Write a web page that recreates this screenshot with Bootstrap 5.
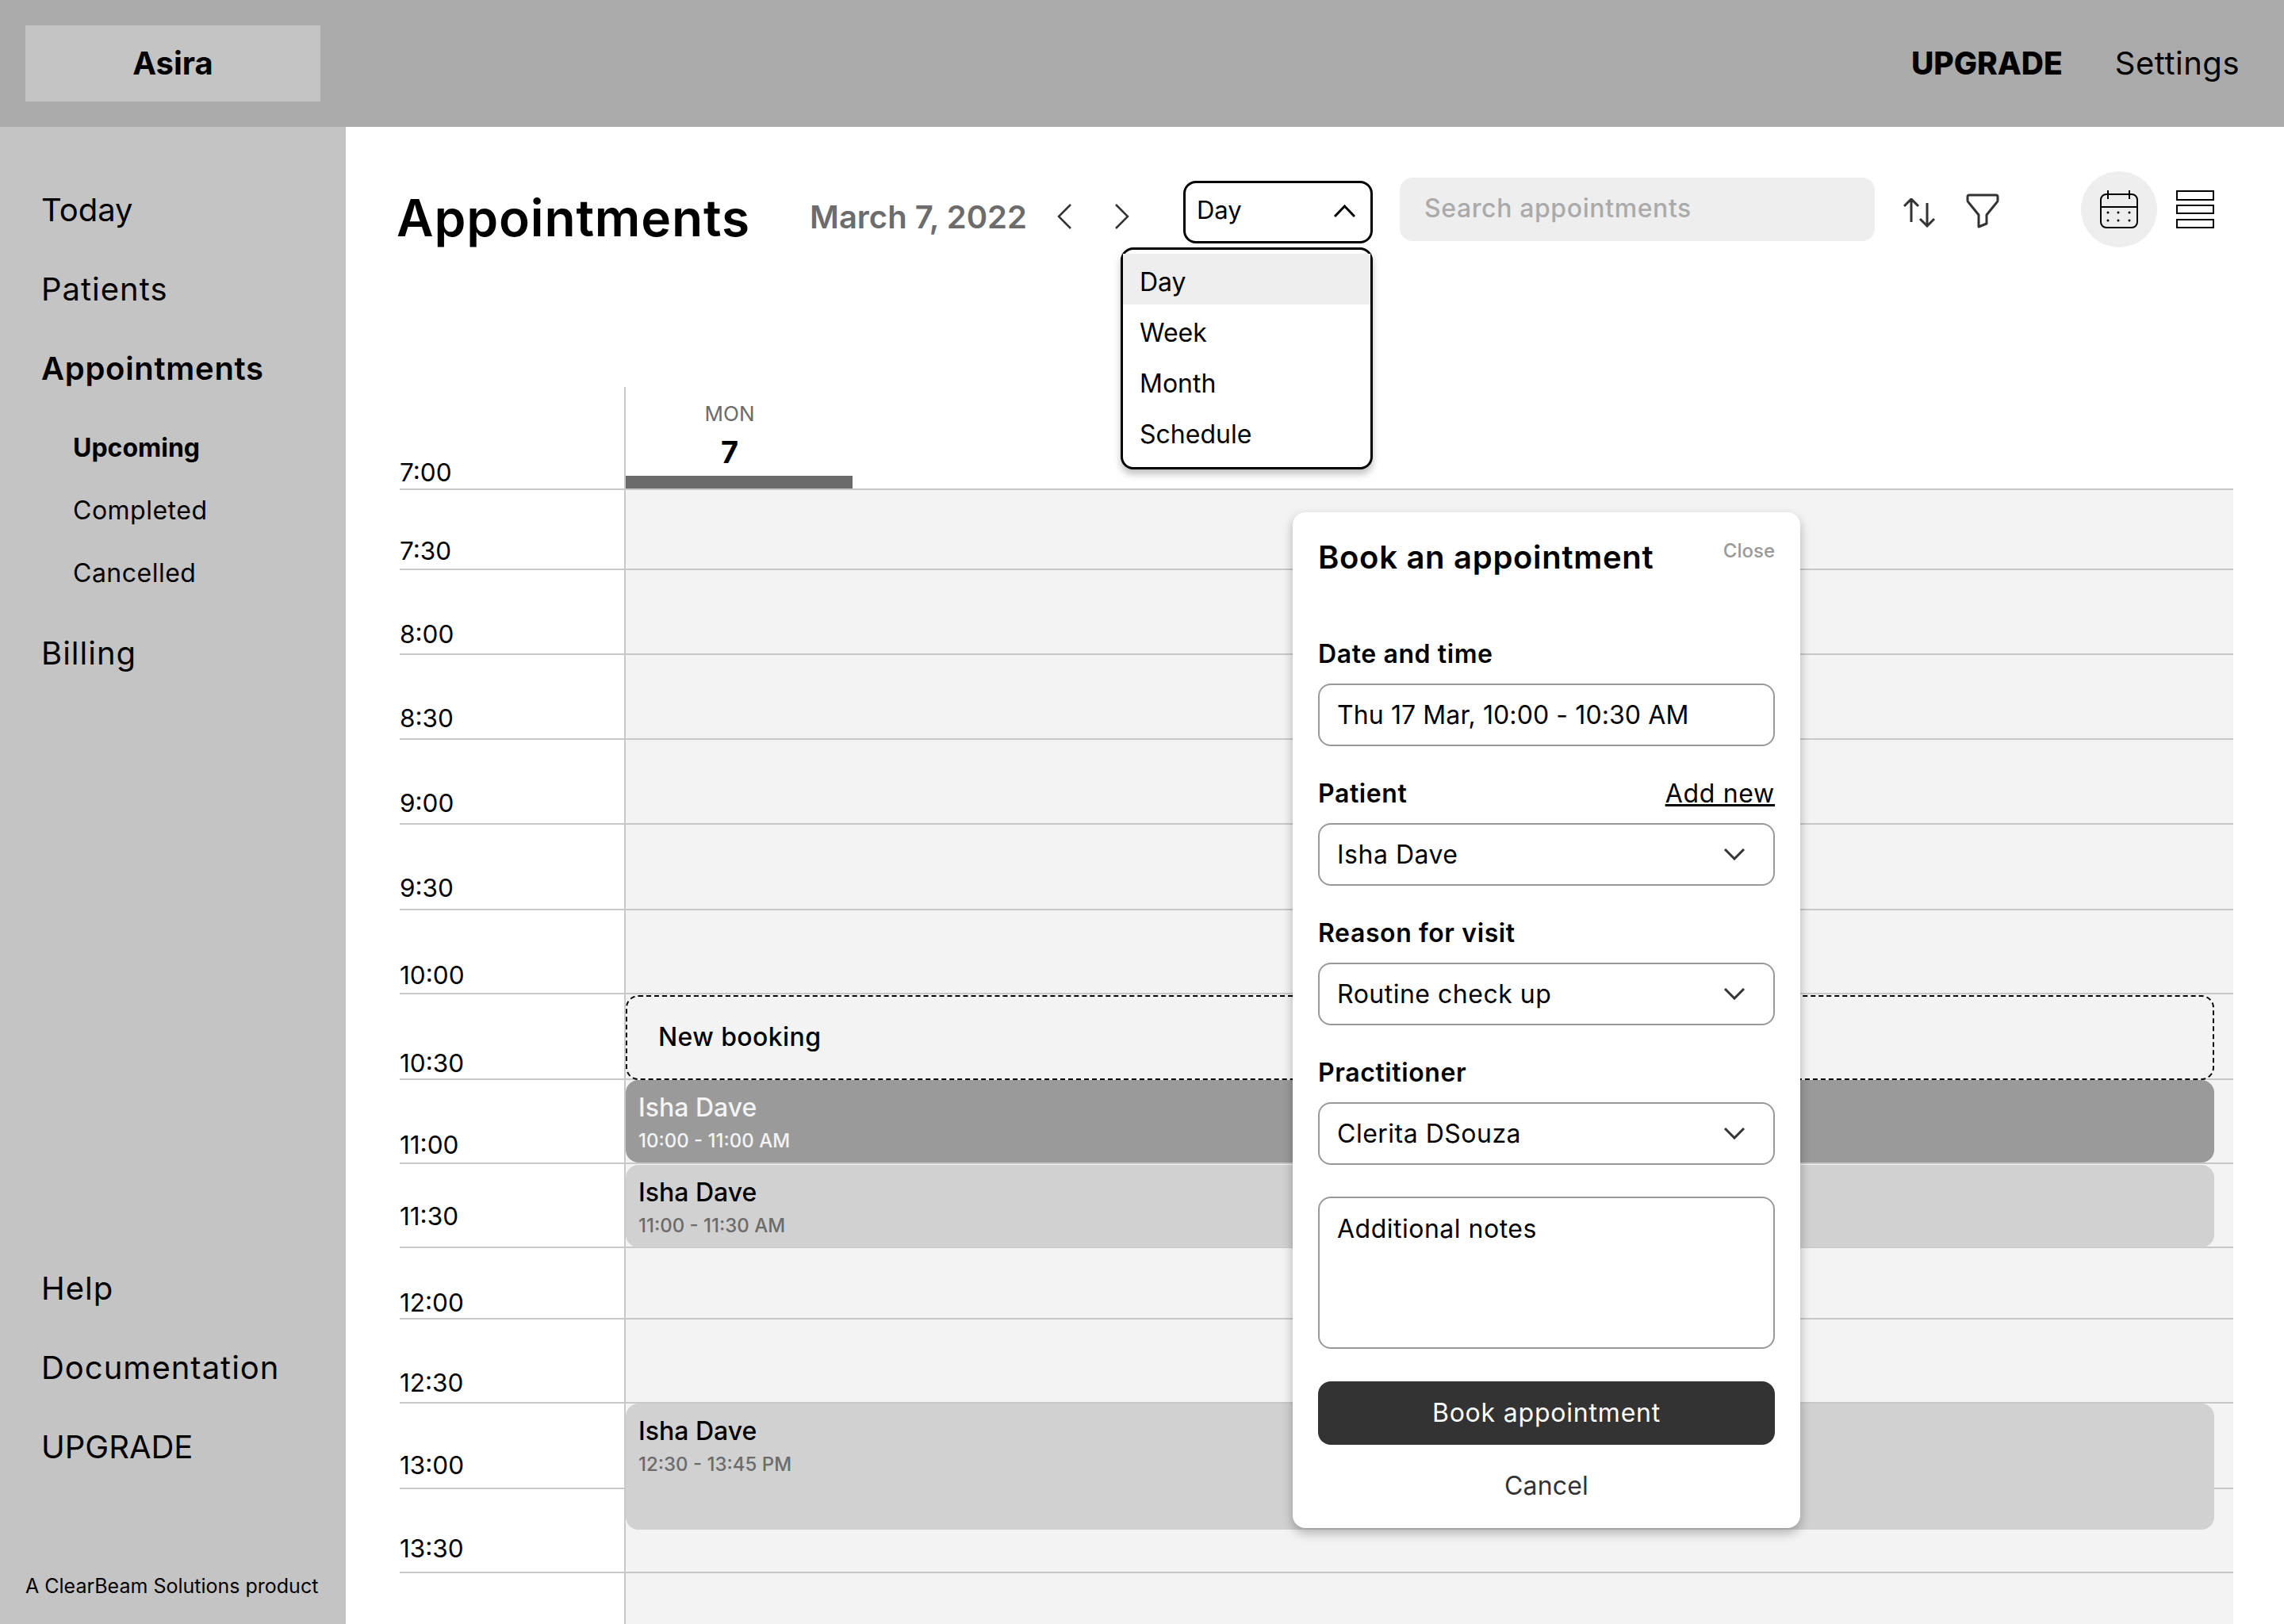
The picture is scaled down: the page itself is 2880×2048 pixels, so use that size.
<!DOCTYPE html>
<html lang="en">
<head>
    <meta charset="UTF-8">
    <title>Appointments - Asira</title>
    <link href="https://cdn.jsdelivr.net/npm/bootstrap@5.3.0/dist/css/bootstrap.min.css" rel="stylesheet">
    <style>
        html, body { height: 100%; overflow: hidden; }
        body { font-family: "Inter", "Liberation Sans", sans-serif; color: #000; background: #fff; }

        /* Top bar */
        .top-bar { height: 160px; background: #aaa; padding: 32px 56px 32px 32px; }
        .logo-box { width: 372px; height: 96px; background: #c4c4c4; font-size: 40px; font-weight: 700; }
        .top-upgrade { font-size: 39px; font-weight: 800; margin-right: 66px; }
        .top-settings { font-size: 40px; letter-spacing: .5px; }

        /* Sidebar */
        .side-bar { width: 436px; background: #c4c4c4; padding-top: 55px; flex-shrink: 0; }
        .side-link { height: 100px; padding-left: 52px; font-size: 40px; letter-spacing: 1px; display: flex; align-items: center; color: #000; text-decoration: none; }
        .side-link.is-on { font-weight: 600; letter-spacing: .7px; }
        .side-link.is-tight { letter-spacing: 0; }
        .side-sub { margin: 10px 0 12px; }
        .side-sublink { height: 79px; padding-left: 92px; font-size: 32px; letter-spacing: .5px; display: flex; align-items: center; color: #000; text-decoration: none; }
        .side-sublink.is-on { font-weight: 700; letter-spacing: 0; }
        .side-foot { margin: 110px 0 33px 32px; font-size: 25px; line-height: 30px; }

        /* Toolbar */
        .main-pane { padding-left: 64px; position: relative; min-width: 0; }
        .tool-row { height: 96px; margin-top: 56px; }
        .page-title { width: 521px; font-size: 64px; letter-spacing: .85px; font-weight: 600; line-height: 76px; margin: 22px 0 0; }
        .page-date { width: 312px; font-size: 40px; font-weight: 600; color: #6c6c6c; margin-top: 20px; }
        .arrow-l { margin-top: 18px; margin-right: 54px; }
        .arrow-r { margin-top: 18px; margin-right: 68px; }
        .view-wrap { width: 239px; margin-top: 7px; position: relative; }
        .view-btn { width: 100%; height: 79px; background: #fff; border: 3px solid #000; border-radius: 16px; font-size: 31px; padding: 0 19px 4px 14px; }
        .view-menu { position: absolute; top: 84px; right: 0; width: 318px; height: 280px; padding: 5px 0 0; margin: 0; border: 3px solid #000; border-radius: 16px; box-shadow: 0 6px 10px rgba(0, 0, 0, .25); font-size: 32px; z-index: 5; display: block; }
        .view-item { height: 64px; padding: 8px 21px 0; display: flex; align-items: center; color: #000; }
        .view-item.is-on { background: #eee; color: #000; }
        .search-box { width: 599px; height: 80px; margin-left: 34px; background: #eee; border: 0; border-radius: 16px; padding: 0 31px 4px; font-size: 32px; letter-spacing: .6px; font-weight: 500; }
        .search-box::placeholder { color: #aaa; opacity: 1; }
        .ico-sort { margin: 8px 39px 0 36px; }
        .ico-filter { margin: 3px 103px 0 0; }
        .cal-disc { width: 96px; height: 96px; background: #eee; margin-right: 24px; }

        /* Day grid */
        .day-grid {
            display: grid;
            margin: 176px 0 0 4px;
            width: 2312px;
            grid-template-columns: 283px 1fr;
            grid-template-rows: 130px 101px 107px 107px 107px 108px 106px 108px 106px 106px 90px 106px 108px 106px 64px;
        }
        .time-cell { border-bottom: 2px solid #c8c8c8; font-size: 31.500px; line-height: 36px; display: flex; align-items: flex-end; }
        .slot-cell { background: #f3f3f3; border-left: 2px solid #c8c8c8; border-bottom: 2px solid #c8c8c8; }
        .slot-head { background: #fff; }
        .slot-end, .time-end { border-bottom: 0; }
        .lift-1 span { margin-bottom: 1px; } .lift-2 span { margin-bottom: 2px; } .lift-4 span { margin-bottom: 4px; }
        .lift-6 span { margin-bottom: 6px; } .lift-7 span { margin-bottom: 7px; } .lift-8 span { margin-bottom: 8px; }
        .lift-10 span { margin-bottom: 10px; } .lift-11 span { margin-bottom: 11px; } .lift-20 span { margin-bottom: 20px; }
        .day-col { width: 286px; height: 100%; }
        .day-name { font-size: 26px; color: #6b6b6b; line-height: 30px; margin-top: 19px; padding-right: 24px; }
        .day-num { font-size: 38px; font-weight: 700; line-height: 44px; margin-top: 11px; padding-right: 24px; }
        .day-band { height: 16px; width: 100%; background: #6b6b6b; margin-top: auto; }

        .slot-event { position: relative; z-index: 2; margin-right: 24px; border-radius: 16px; padding: 16px 16px 0; }
        .ev-name { font-size: 32px; line-height: 38px; font-weight: 500; }
        .ev-time { font-size: 24px; line-height: 30px; font-weight: 500; margin-top: 8px; }
        .ev-new { height: 107px; margin-top: 1px; border: 2px dashed #000; background: #f3f3f3; padding: 0 0 2px 39px; font-size: 32px; letter-spacing: .4px; font-weight: 500; display: flex; align-items: center; }
        .ev-now { height: 104px; background: #9a9a9a; color: #f4f4f4; }
        .ev-next { height: 104px; margin-top: 1px; background: #d1d1d1; }
        .ev-late { height: 159px; background: #d1d1d1; }
        .ev-next .ev-time, .ev-late .ev-time { color: #6b6b6b; }

        /* Booking panel */
        .book-panel { position: absolute; left: 1194px; top: 486px; width: 640px; height: 1281px; background: #fff; border-radius: 16px; padding: 33px 32px; box-shadow: 0 6px 14px rgba(0, 0, 0, .28); z-index: 4; }
        .book-title { font-size: 40px; letter-spacing: .7px; font-weight: 600; line-height: 48px; margin: 0; }
        .book-close { font-size: 24px; line-height: 28px; color: #999; font-weight: 500; margin-top: 2px; }
        .book-head { margin-bottom: 80px; }
        .book-label { font-size: 32px; letter-spacing: .6px; font-weight: 600; line-height: 36px; margin: 0; }
        .book-add { font-size: 32px; letter-spacing: .7px; line-height: 36px; color: #000; }
        .book-input, .book-select, .book-notes { height: 79px; border: 2px solid #999; border-radius: 16px; padding: 0 22px; font-size: 32px; letter-spacing: .5px; color: #000; box-shadow: none; }
        .book-input { letter-spacing: .1px; }
        .book-select {
            background-image: url("data:image/svg+xml,%3csvg xmlns='http://www.w3.org/2000/svg' viewBox='0 0 26 15'%3e%3cpath fill='none' stroke='%23333' stroke-width='3' d='M1 1l12 12L25 1'/%3e%3c/svg%3e");
            background-size: 26px 15px;
            background-position: right 36px center;
        }
        .book-field { margin-top: 19px; margin-bottom: 42px; }
        .book-notes { height: 192px; padding-top: 15px; margin-top: 40px; resize: none; }
        .book-notes::placeholder { color: #000; opacity: 1; }
        .book-submit { height: 80px; margin-top: 41px; background: #333; border: 0; border-radius: 16px; font-size: 32px; letter-spacing: .8px; color: #fff; }
        .book-cancel { height: 40px; margin-top: 32px; font-size: 32px; letter-spacing: .2px; line-height: 40px; color: #333; text-align: center; }
    </style>
</head>
<body class="d-flex flex-column">

    <nav class="navbar top-bar flex-nowrap">
        <div class="logo-box d-flex align-items-center justify-content-center">Asira</div>
        <div class="d-flex align-items-center">
            <span class="top-upgrade">UPGRADE</span>
            <span class="top-settings">Settings</span>
        </div>
    </nav>

    <div class="d-flex flex-grow-1">
        <aside class="side-bar d-flex flex-column">
            <a class="side-link is-tight" href="#">Today</a>
            <a class="side-link" href="#">Patients</a>
            <a class="side-link is-on" href="#">Appointments</a>
            <div class="side-sub">
                <a class="side-sublink is-on" href="#">Upcoming</a>
                <a class="side-sublink" href="#">Completed</a>
                <a class="side-sublink" href="#">Cancelled</a>
            </div>
            <a class="side-link" href="#">Billing</a>
            <div class="mt-auto">
                <a class="side-link" href="#">Help</a>
                <a class="side-link" href="#">Documentation</a>
                <a class="side-link is-tight" href="#">UPGRADE</a>
            </div>
            <div class="side-foot">A ClearBeam Solutions product</div>
        </aside>

        <main class="main-pane flex-grow-1">
            <div class="tool-row d-flex align-items-center">
                <h1 class="page-title">Appointments</h1>
                <div class="page-date">March 7, 2022</div>
                <svg class="arrow-l" width="18" height="32" viewBox="0 0 18 32"><path d="M17 1L2 16l15 15" fill="none" stroke="#333" stroke-width="2.5"/></svg>
                <svg class="arrow-r" width="19" height="32" viewBox="0 0 19 32"><path d="M2 1l15 15L2 31" fill="none" stroke="#333" stroke-width="2.5"/></svg>
                <div class="view-wrap">
                    <div class="view-btn d-flex align-items-center justify-content-between">
                        <span>Day</span>
                        <svg width="27" height="16" viewBox="0 0 27 16"><path d="M1 15L13.500 2 26 15" fill="none" stroke="#000" stroke-width="3"/></svg>
                    </div>
                    <div class="dropdown-menu view-menu">
                        <a class="dropdown-item view-item is-on" href="#">Day</a>
                        <a class="dropdown-item view-item" href="#">Week</a>
                        <a class="dropdown-item view-item" href="#">Month</a>
                        <a class="dropdown-item view-item" href="#">Schedule</a>
                    </div>
                </div>
                <input class="search-box" type="text" placeholder="Search appointments">
                <svg class="ico-sort" width="40" height="37" viewBox="0 0 40 37"><path d="M10 2v28M1 10l9-9 9 9M30 6v29M21 26l9 9 9-9" fill="none" stroke="#333" stroke-width="3"/></svg>
                <svg class="ico-filter" width="42" height="44" viewBox="0 0 42 44"><path d="M4 2h34q2 0 2 2v5q0 1-1 2L26 27v11l-10 4V27L3 11q-1-1-1-2V4q0-2 2-2z" fill="none" stroke="#333" stroke-width="3" stroke-linejoin="round"/></svg>
                <div class="cal-disc rounded-circle d-flex align-items-center justify-content-center">
                    <svg width="48" height="48" viewBox="0 0 48 48">
                        <rect x="1" y="5" width="46" height="42" rx="7" fill="none" stroke="#000" stroke-width="2"/>
                        <path d="M1 21h46M10 0v11M37 0v11" stroke="#000" stroke-width="2"/>
                        <g fill="#000"><circle cx="10" cy="28" r="1.500"/><circle cx="23" cy="28" r="1.500"/><circle cx="37" cy="28" r="1.500"/><circle cx="10" cy="38" r="1.500"/><circle cx="23" cy="38" r="1.500"/><circle cx="37" cy="38" r="1.500"/></g>
                    </svg>
                </div>
                <svg width="48" height="48" viewBox="0 0 48 48"><g fill="none" stroke="#000" stroke-width="2"><rect x="1" y="1" width="46" height="11"/><rect x="1" y="19" width="46" height="10"/><rect x="1" y="37" width="46" height="10"/></g></svg>
            </div>

            <div class="day-grid">
                <div class="time-cell lift-2"><span>7:00</span></div>
                <div class="slot-cell slot-head">
                    <div class="day-col d-flex flex-column align-items-center">
                        <div class="day-name">MON</div>
                        <div class="day-num">7</div>
                        <div class="day-band"></div>
                    </div>
                </div>
                <div class="time-cell lift-4"><span>7:30</span></div><div class="slot-cell"></div>
                <div class="time-cell lift-6"><span>8:00</span></div><div class="slot-cell"></div>
                <div class="time-cell lift-7"><span>8:30</span></div><div class="slot-cell"></div>
                <div class="time-cell lift-7"><span>9:00</span></div><div class="slot-cell"></div>
                <div class="time-cell lift-8"><span>9:30</span></div><div class="slot-cell"></div>
                <div class="time-cell lift-4"><span>10:00</span></div><div class="slot-cell"></div>
                <div class="time-cell lift-1"><span>10:30</span></div>
                <div class="slot-cell"><div class="slot-event ev-new">New booking</div></div>
                <div class="time-cell lift-4"><span>11:00</span></div>
                <div class="slot-cell">
                    <div class="slot-event ev-now">
                        <div class="ev-name">Isha Dave</div>
                        <div class="ev-time">10:00 - 11:00 AM</div>
                    </div>
                </div>
                <div class="time-cell lift-20"><span>11:30</span></div>
                <div class="slot-cell">
                    <div class="slot-event ev-next">
                        <div class="ev-name">Isha Dave</div>
                        <div class="ev-time">11:00 - 11:30 AM</div>
                    </div>
                </div>
                <div class="time-cell lift-1"><span>12:00</span></div><div class="slot-cell"></div>
                <div class="time-cell lift-6"><span>12:30</span></div><div class="slot-cell"></div>
                <div class="time-cell lift-10"><span>13:00</span></div>
                <div class="slot-cell">
                    <div class="slot-event ev-late">
                        <div class="ev-name">Isha Dave</div>
                        <div class="ev-time">12:30 - 13:45 PM</div>
                    </div>
                </div>
                <div class="time-cell lift-11"><span>13:30</span></div><div class="slot-cell"></div>
                <div class="time-cell time-end"></div><div class="slot-cell slot-end"></div>
            </div>

            <form class="book-panel d-flex flex-column">
                <div class="book-head d-flex justify-content-between align-items-start">
                    <h2 class="book-title">Book an appointment</h2>
                    <span class="book-close">Close</span>
                </div>
                <label class="book-label">Date and time</label>
                <input class="form-control book-input book-field" type="text" value="Thu 17 Mar, 10:00 - 10:30 AM">
                <div class="d-flex justify-content-between">
                    <label class="book-label">Patient</label>
                    <a class="book-add" href="#">Add new</a>
                </div>
                <select class="form-select book-select book-field"><option>Isha Dave</option></select>
                <label class="book-label">Reason for visit</label>
                <select class="form-select book-select book-field"><option>Routine check up</option></select>
                <label class="book-label">Practitioner</label>
                <select class="form-select book-select book-field mb-0"><option>Clerita DSouza</option></select>
                <textarea class="form-control book-notes" placeholder="Additional notes"></textarea>
                <button class="btn book-submit" type="button">Book appointment</button>
                <div class="book-cancel">Cancel</div>
            </form>
        </main>
    </div>

    <script src="https://cdn.jsdelivr.net/npm/bootstrap@5.3.0/dist/js/bootstrap.bundle.min.js"></script>
</body>
</html>
